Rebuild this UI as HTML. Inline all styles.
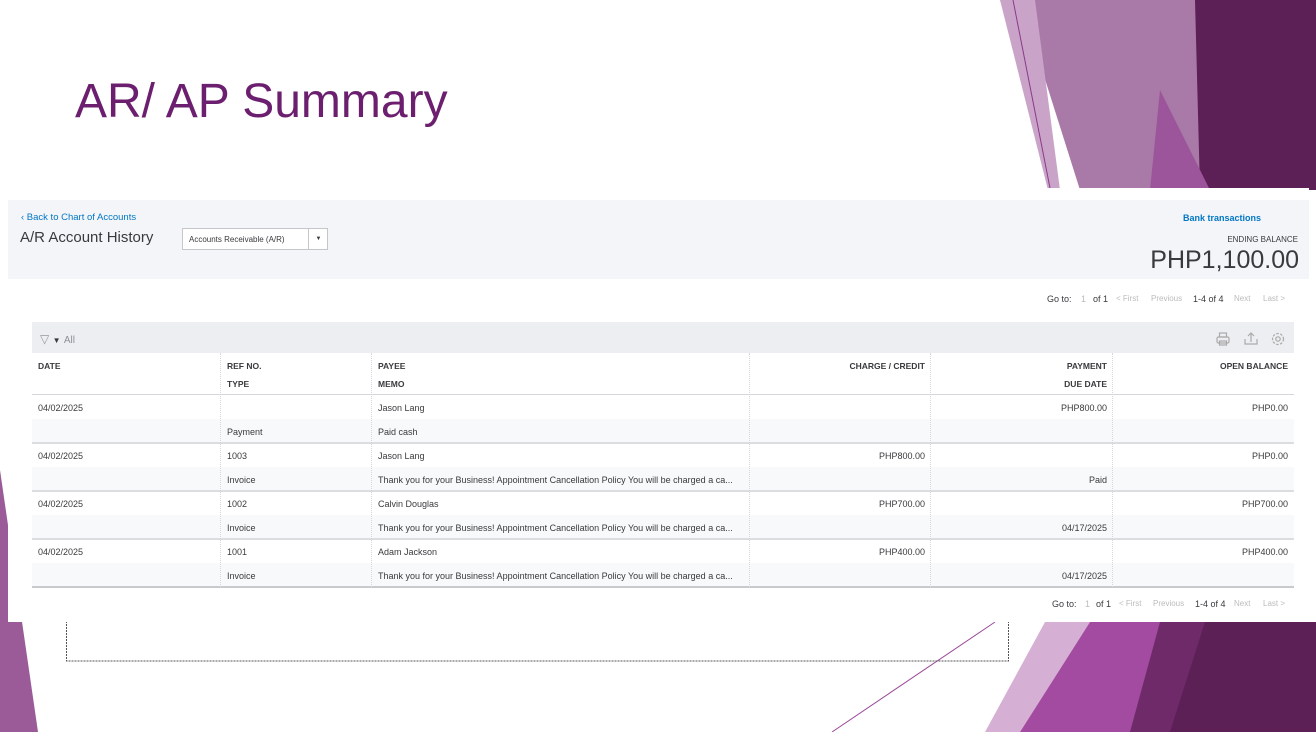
<!DOCTYPE html>
<html><head><meta charset="utf-8"><style>
*{margin:0;padding:0;box-sizing:border-box}
body{width:1316px;height:732px;position:relative;overflow:hidden;background:#fff;font-family:"Liberation Sans",sans-serif}
.abs{position:absolute}
.t{position:absolute;font-size:9px;color:#393a3d;white-space:nowrap}
.h{position:absolute;font-size:8.5px;font-weight:bold;color:#393a3d;white-space:nowrap}
.r{text-align:right}
.vl{position:absolute;width:0;border-left:1px dotted #d4d7dc}
.pg{position:absolute;font-size:9px;color:#393a3d;white-space:nowrap}
.pg span{position:absolute;top:0}
.g{color:#bbb;font-size:8px}
</style></head><body>
<svg class="abs" style="left:0;top:0" width="1316" height="732">
<polygon points="0,470 38,732 0,732" fill="#9a5b98"/>
<polygon points="1020,0 1200,0 1190,190 1080,190" fill="#a97aa8"/>
<polygon points="1160,0 1316,0 1316,190 1150,190" fill="#a97aa8"/>
<polygon points="1195,0 1316,0 1316,190 1200,190" fill="#5c1f56"/>
<polygon points="1160,90 1210,190 1150,190" fill="#9c559a"/>
<polygon points="1000,0 1035,0 1060,190 1048,190" fill="#c9a4c8"/>
<line x1="1013" y1="0" x2="1050" y2="188" stroke="#8a3a88" stroke-width="1"/>
<polygon points="985,732 1045,622 1090,622 1020,732" fill="#d6b0d4"/>
<polygon points="1020,732 1090,622 1200,622 1140,732" fill="#a34ba0"/>
<polygon points="1130,732 1170,622 1316,622 1316,732" fill="#5c1f56"/>
<polygon points="1130,732 1160,622 1205,622 1170,732" fill="#6e2a69"/>
<line x1="832" y1="732" x2="995" y2="622" stroke="#9a4a98" stroke-width="1"/>
<rect x="66.5" y="600" width="942" height="61" fill="none" stroke="#555" stroke-dasharray="2,1" stroke-width="1"/>
</svg>
<div class="abs" style="left:75px;top:74px;font-size:48px;color:#6b1f6e">AR/ AP Summary</div>

<div class="abs" style="left:8px;top:188px;width:1301px;height:434px;background:#fff"></div>
<div class="abs" style="left:8px;top:200px;width:1301px;height:79px;background:#f4f5f8"></div>
<div class="abs" style="left:21px;top:212px;font-size:9.5px;color:#0077c5">‹ Back to Chart of Accounts</div>
<div class="abs" style="left:20px;top:229px;font-size:15px;color:#393a3d">A/R Account History</div>
<div class="abs" style="left:182px;top:228px;width:146px;height:22px;border:1px solid #c4c6ca;background:#fff;font-size:8px;color:#393a3d;padding:6px 6px">Accounts Receivable (A/R)<span style="position:absolute;left:125px;top:0;height:20px;border-left:1px solid #c4c6ca;width:20px;text-align:center;line-height:20px;font-size:6px">▼</span></div>
<div class="abs" style="left:1183px;top:213px;font-size:9px;font-weight:bold;color:#0077c5">Bank transactions</div>
<div class="abs r" style="right:18px;top:235px;font-size:8px;color:#393a3d">ENDING BALANCE</div>
<div class="abs r" style="right:17px;top:246px;font-size:25px;color:#393a3d">PHP1,100.00</div>

<div class="pg" style="left:0;top:294px">
<span style="left:1047px">Go to:</span><span class="g" style="left:1081px;font-size:9px">1</span><span style="left:1093px">of 1</span><span class="g" style="left:1116px">&lt; First</span><span class="g" style="left:1151px">Previous</span><span style="left:1193px">1-4 of 4</span><span class="g" style="left:1234px">Next</span><span class="g" style="left:1263px">Last &gt;</span>
</div>

<div class="abs" style="left:32px;top:322px;width:1262px;height:31px;background:#eceef1"></div>
<div class="abs" style="left:40px;top:332px;font-size:12px;color:#999">▽ <span style="font-size:8px;color:#393a3d">▼</span> <span style="font-size:10px;color:#8d9096">All</span></div>
<svg class="abs" style="left:1214px;top:331px" width="74" height="16" fill="none" stroke="#aaa" stroke-width="1.2">
<rect x="3" y="6" width="12" height="6" rx="1.5"/><rect x="5.5" y="2" width="7" height="4"/><rect x="5.5" y="10" width="7" height="4"/>
<path d="M31 8v5h12v-5M37 11V2M34 5l3-3 3 3"/>
<circle cx="64" cy="8" r="2.2"/><circle cx="64" cy="8" r="5.5" stroke-dasharray="2.5,1.5"/>
</svg>

<div class="abs" style="left:32px;top:394px;width:1262px;height:1px;background:#d4d7dc"></div>
<div class="abs" style="left:32px;top:419px;width:1262px;height:24px;background:#f8f9fa"></div>
<div class="abs" style="left:32px;top:442px;width:1262px;height:2px;background:#dcdde0"></div>
<div class="abs" style="left:32px;top:467px;width:1262px;height:24px;background:#f8f9fa"></div>
<div class="abs" style="left:32px;top:490px;width:1262px;height:2px;background:#dcdde0"></div>
<div class="abs" style="left:32px;top:515px;width:1262px;height:24px;background:#f8f9fa"></div>
<div class="abs" style="left:32px;top:538px;width:1262px;height:2px;background:#dcdde0"></div>
<div class="abs" style="left:32px;top:563px;width:1262px;height:24px;background:#f8f9fa"></div>
<div class="abs" style="left:32px;top:586px;width:1262px;height:2px;background:#c8cacd"></div>
<div class="vl" style="left:220px;top:353px;height:234px"></div>
<div class="vl" style="left:371px;top:353px;height:234px"></div>
<div class="vl" style="left:749px;top:353px;height:234px"></div>
<div class="vl" style="left:930px;top:353px;height:234px"></div>
<div class="vl" style="left:1112px;top:353px;height:234px"></div>

<div class="h" style="left:38px;top:361px">DATE</div>
<div class="h" style="left:227px;top:361px">REF NO.</div>
<div class="h" style="left:227px;top:379px">TYPE</div>
<div class="h" style="left:378px;top:361px">PAYEE</div>
<div class="h" style="left:378px;top:379px">MEMO</div>
<div class="h" style="right:391px;top:361px">CHARGE / CREDIT</div>
<div class="h" style="right:209px;top:361px">PAYMENT</div>
<div class="h" style="right:209px;top:379px">DUE DATE</div>
<div class="h" style="right:28px;top:361px">OPEN BALANCE</div>

<div class="t" style="left:38px;top:403px">04/02/2025</div>
<div class="t" style="left:378px;top:403px">Jason Lang</div>
<div class="t" style="right:209px;top:403px">PHP800.00</div>
<div class="t" style="right:28px;top:403px">PHP0.00</div>
<div class="t" style="left:227px;top:427px">Payment</div>
<div class="t" style="left:378px;top:427px">Paid cash</div>

<div class="t" style="left:38px;top:451px">04/02/2025</div>
<div class="t" style="left:227px;top:451px">1003</div>
<div class="t" style="left:378px;top:451px">Jason Lang</div>
<div class="t" style="right:391px;top:451px">PHP800.00</div>
<div class="t" style="right:28px;top:451px">PHP0.00</div>
<div class="t" style="left:227px;top:475px">Invoice</div>
<div class="t" style="left:378px;top:475px">Thank you for your Business! Appointment Cancellation Policy You will be charged a ca...</div>
<div class="t" style="right:209px;top:475px">Paid</div>

<div class="t" style="left:38px;top:499px">04/02/2025</div>
<div class="t" style="left:227px;top:499px">1002</div>
<div class="t" style="left:378px;top:499px">Calvin Douglas</div>
<div class="t" style="right:391px;top:499px">PHP700.00</div>
<div class="t" style="right:28px;top:499px">PHP700.00</div>
<div class="t" style="left:227px;top:523px">Invoice</div>
<div class="t" style="left:378px;top:523px">Thank you for your Business! Appointment Cancellation Policy You will be charged a ca...</div>
<div class="t" style="right:209px;top:523px">04/17/2025</div>

<div class="t" style="left:38px;top:547px">04/02/2025</div>
<div class="t" style="left:227px;top:547px">1001</div>
<div class="t" style="left:378px;top:547px">Adam Jackson</div>
<div class="t" style="right:391px;top:547px">PHP400.00</div>
<div class="t" style="right:28px;top:547px">PHP400.00</div>
<div class="t" style="left:227px;top:571px">Invoice</div>
<div class="t" style="left:378px;top:571px">Thank you for your Business! Appointment Cancellation Policy You will be charged a ca...</div>
<div class="t" style="right:209px;top:571px">04/17/2025</div>

<div class="pg" style="left:0;top:599px">
<span style="left:1052px">Go to:</span><span class="g" style="left:1085px;font-size:9px">1</span><span style="left:1096px">of 1</span><span class="g" style="left:1119px">&lt; First</span><span class="g" style="left:1153px">Previous</span><span style="left:1195px">1-4 of 4</span><span class="g" style="left:1234px">Next</span><span class="g" style="left:1263px">Last &gt;</span>
</div>
</body></html>
